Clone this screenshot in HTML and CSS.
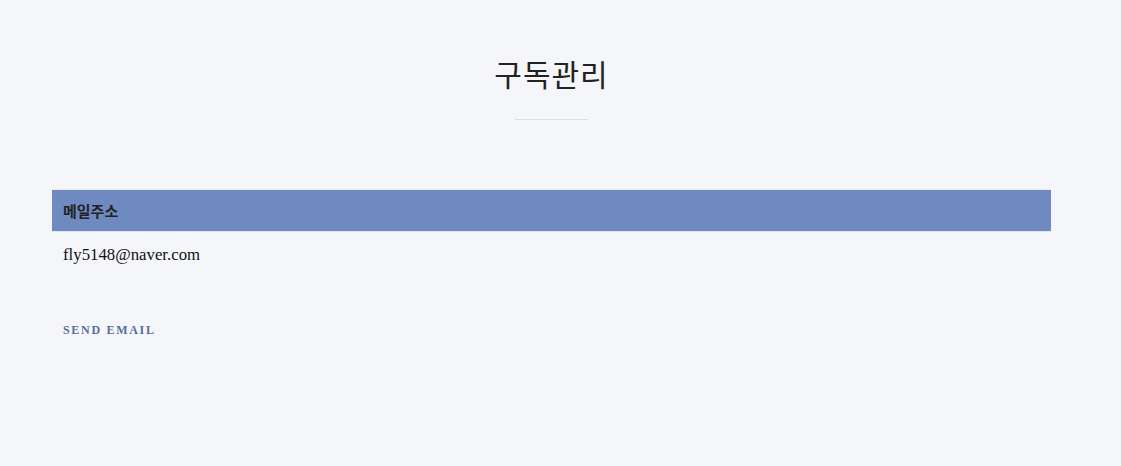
FILE: index.html
```html
<!DOCTYPE html>
<html lang="ko">
<head>
<meta charset="utf-8">
<link rel="stylesheet" href="styles.css">
</head>
<body>
<div class="page">
  <h1 class="title">구독관리</h1>
  <div class="divider"></div>
  <table class="subs">
    <thead><tr><th>메일주소</th></tr></thead>
    <tbody><tr><td>fly5148@naver.com</td></tr></tbody>
  </table>
  <a class="send" href="#">SEND EMAIL</a>
</div>
</body>
</html>
```
FILE: styles.css
```css
html, body { margin: 0; padding: 0; background: #f5f6fa; }
body { font-family: "Liberation Serif", "Noto Sans CJK KR", serif; color: #222; }
.page { width: 999px; margin-left: 52px; display: flex; flex-direction: column; align-items: stretch; }
.title { margin: 53px 0 0; text-align: center; font-family: "Noto Sans CJK KR", sans-serif; font-weight: 400; font-size: 30px; line-height: 40px; color: #222; letter-spacing: 1px; }
.divider { align-self: center; width: 73px; height: 1px; background: #dcdde2; margin-top: 26px; }
.subs { margin-top: 69px; border-collapse: collapse; width: 100%; }
.subs th { background: #6e8ac0; text-align: left; font-family: "Noto Sans CJK KR", sans-serif; font-weight: 700; font-size: 15px; color: #222; height: 42px; padding: 0 11px; border-top: 1px solid #e6e8ee; border-bottom: 1px solid #e6e8ee; box-sizing: border-box; }
.subs td { font-size: 16.8px; padding: 13px 11px 10px; color: #111; }
.send { margin: 48px 0 0 11px; font-size: 12px; font-weight: 700; letter-spacing: 1.7px; color: #5b6c9e; text-decoration: none; }
```
